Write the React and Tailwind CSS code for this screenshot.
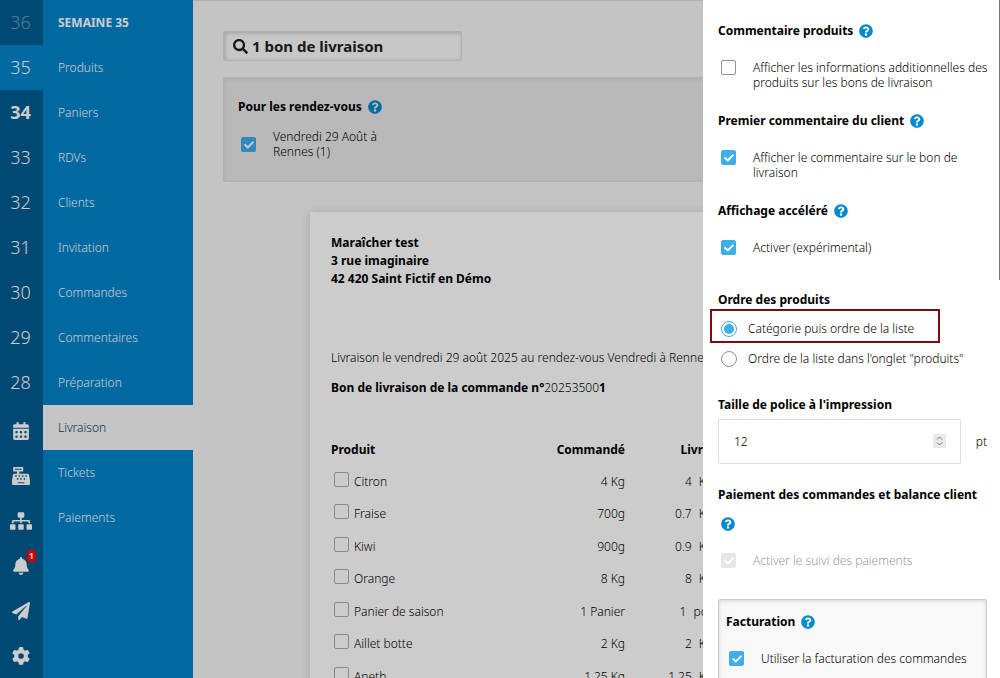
import { useState } from "react";
import {
  FaBell,
  FaCashRegister,
  FaCheck,
  FaPaperPlane,
  FaQuestionCircle,
  FaSearch,
  FaSitemap,
} from "react-icons/fa";
import { FaCalendarDays, FaGear } from "react-icons/fa6";

/* ================= DATA ================= */

const weeks = [36, 35, 34, 33, 32, 31, 30, 29, 28];

const tools = [
  { name: "Calendrier", Icon: FaCalendarDays, size: 18 },
  { name: "Caisse", Icon: FaCashRegister, size: 18 },
  { name: "Réseau", Icon: FaSitemap, size: 22 },
  { name: "Notifications", Icon: FaBell, size: 18, count: 1 },
  { name: "Envois", Icon: FaPaperPlane, size: 18 },
  { name: "Réglages", Icon: FaGear, size: 18 },
];

const menu = [
  "Produits",
  "Paniers",
  "RDVs",
  "Clients",
  "Invitation",
  "Commandes",
  "Commentaires",
  "Préparation",
  "Livraison",
  "Tickets",
  "Paiements",
];

const products = [
  { name: "Citron", ordered: "4 Kg", delivered: "4", unit: "Kg" },
  { name: "Fraise", ordered: "700g", delivered: "0.7", unit: "Kg" },
  { name: "Kiwi", ordered: "900g", delivered: "0.9", unit: "Kg" },
  { name: "Orange", ordered: "8 Kg", delivered: "8", unit: "Kg" },
  { name: "Panier de saison", ordered: "1 Panier", delivered: "1", unit: "pce" },
  { name: "Aillet botte", ordered: "2 Kg", delivered: "2", unit: "Kg" },
  { name: "Aneth", ordered: "1.25 Kg", delivered: "1.25", unit: "Kg" },
];

/* ================= CONTROLS ================= */

function Help() {
  return (
    <button type="button" aria-label="Aide" className="shrink-0 text-[#0088cc]">
      <FaQuestionCircle size={14} />
    </button>
  );
}

function Heading({ children, help }) {
  return (
    <div className={`flex items-center gap-[6px] ${help ? "h-[30px]" : "h-7"}`}>
      <h3 className="font-bold whitespace-nowrap text-black">{children}</h3>
      {help && <Help />}
    </div>
  );
}

function Checkbox({ id, faded, ...props }) {
  return (
    <span className="relative block size-[15px] shrink-0">
      <input
        id={id}
        type="checkbox"
        className={`peer block size-[15px] appearance-none rounded-[2px] border checked:border-[#3daee9] checked:bg-[#3daee9] disabled:border-[#e6e6ea] disabled:bg-[#e6e6ea] ${
          faded ? "border-[#a9a9b5]" : "border-[#8f8f9d]"
        }`}
        {...props}
      />
      <FaCheck
        size={10}
        className="pointer-events-none absolute top-[3px] left-[3px] hidden text-white peer-checked:block"
      />
    </span>
  );
}

function Option({ id, label, disabled, defaultChecked }) {
  return (
    <div className="-mr-1 flex min-h-[60px] items-start gap-[17px] pt-[14px] pl-[3px]">
      <Checkbox id={id} disabled={disabled} defaultChecked={defaultChecked} />
      <label
        htmlFor={id}
        className={`leading-[15px] ${disabled ? "text-[#999]" : "text-black"}`}
      >
        {label}
      </label>
    </div>
  );
}

function Radio({ id, label, value, current, onChange }) {
  return (
    <div className="flex h-[30px] items-center gap-[11px] pl-[3px]">
      <input
        id={id}
        type="radio"
        name="ordre"
        value={value}
        checked={current === value}
        onChange={() => onChange(value)}
        className="block size-4 shrink-0 appearance-none rounded-full border border-[#8f8f9d] bg-white bg-clip-content p-[2px] checked:border-[#3daee9] checked:bg-[#3daee9]"
      />
      <label htmlFor={id}>{label}</label>
    </div>
  );
}

/* ================= NAVIGATION ================= */

function Rail() {
  return (
    <nav className="w-[43px] shrink-0 bg-[#005c91] text-white">
      {weeks.map((w) => (
        <a
          key={w}
          href={`#semaine-${w}`}
          className={`flex h-[45px] items-center justify-center pr-[2px] pb-[2px] text-lg ${
            w === 36 ? "text-white/40" : ""
          } ${w === 35 ? "bg-[#0084cb]" : ""} ${
            w === 34 ? "font-bold" : "font-light"
          }`}
        >
          {w}
        </a>
      ))}

      <div className="pt-[3px]">
        {tools.map(({ name, Icon, size, count }) => (
          <a
            key={name}
            href="#outils"
            aria-label={name}
            className="relative flex h-[45px] items-center justify-center pr-[2px]"
          >
            <Icon size={size} />
            {count && (
              <span className="absolute top-[7px] right-[7px] rounded-[3px] bg-[#f00] px-[2px] text-[9px] leading-[12px] font-bold">
                {count}
              </span>
            )}
          </a>
        ))}
      </div>
    </nav>
  );
}

function Menu() {
  return (
    <nav className="w-[150px] shrink-0 bg-[#0084cb] text-white">
      <h2 className="flex h-[45px] items-center pl-[15px] font-bold">
        SEMAINE 35
      </h2>
      {menu.map((item) => (
        <a
          key={item}
          href="#menu"
          className={`flex h-[45px] items-center pl-[15px] ${
            item === "Livraison" ? "bg-[#f7f7f7] text-[#004466]" : ""
          }`}
        >
          {item}
        </a>
      ))}
    </nav>
  );
}

/* ================= DELIVERY NOTE ================= */

function DeliveryNote() {
  return (
    <article className="mx-[87px] mt-[30px] bg-white px-[21px] pt-[22px] shadow-[0_0_10px_rgba(0,0,0,0.15)]">
      <address className="leading-[18px] font-bold not-italic">
        Maraîcher test
        <br />
        3 rue imaginaire
        <br />
        42 420 Saint Fictif en Démo
      </address>

      <p className="mt-[61px] leading-[18px] whitespace-nowrap">
        Livraison le vendredi 29 août 2025 au rendez-vous Vendredi à Rennes
      </p>
      <p className="mt-3 leading-[18px]">
        <b className="font-bold">Bon de livraison de la commande n°</b>
        20253500
        <b className="font-bold">1</b>
      </p>

      <table className="mt-[38px] w-full table-fixed">
        <thead>
          <tr className="h-[30px]">
            <th className="w-[150px] text-left font-bold">Produit</th>
            <th className="w-[144px] text-right font-bold">Commandé</th>
            <th className="w-[88px] pr-[3px] text-right font-bold">Livré</th>
            <th />
          </tr>
        </thead>
        <tbody>
          {products.map((p) => (
            <tr key={p.name} className="odd:h-[33px] even:h-[32px]">
              <td>
                <div className="flex gap-[5px] pl-[3px]">
                  <Checkbox id={p.name} faded />
                  <label htmlFor={p.name} className="leading-[20px]">
                    {p.name}
                  </label>
                </div>
              </td>
              <td className="text-right">{p.ordered}</td>
              <td>
                <div className="flex justify-end gap-[7px]">
                  <span>{p.delivered}</span>
                  <span>{p.unit}</span>
                </div>
              </td>
              <td />
            </tr>
          ))}
        </tbody>
      </table>
    </article>
  );
}

/* ================= SETTINGS DRAWER ================= */

function Drawer() {
  const [order, setOrder] = useState("categorie");

  return (
    <aside className="absolute inset-y-0 right-0 w-[297px] overflow-hidden bg-white pt-4 pr-[13px] pl-[15px]">
      <Heading help>Commentaire produits</Heading>
      <Option
        id="infos"
        label="Afficher les informations additionnelles des produits sur les bons de livraison"
      />

      <Heading help>Premier commentaire du client</Heading>
      <Option
        id="commentaire"
        label="Afficher le commentaire sur le bon de livraison"
        defaultChecked
      />

      <Heading help>Affichage accéléré</Heading>
      <Option id="accelere" label="Activer (expérimental)" defaultChecked />

      <Heading>Ordre des produits</Heading>
      <div className="relative">
        <Radio
          id="categorie"
          value="categorie"
          label="Catégorie puis ordre de la liste"
          current={order}
          onChange={setOrder}
        />
        <Radio
          id="liste"
          value="liste"
          label={`Ordre de la liste dans l'onglet "produits"`}
          current={order}
          onChange={setOrder}
        />
        <div className="pointer-events-none absolute -top-[5px] -left-[8px] h-[34px] w-[230px] border-2 border-[#7d0c10]" />
      </div>

      <label
        htmlFor="taille"
        className="mt-[17px] flex h-7 items-center font-bold text-black"
      >
        Taille de police à l'impression
      </label>
      <div className="flex items-center justify-between">
        <div className="relative w-[243px]">
          <input
            id="taille"
            type="number"
            defaultValue={12}
            className="block h-[45px] w-full [appearance:textfield] rounded-[2px] border border-[#ddd] px-[15px] font-light"
          />
          <svg
            viewBox="0 0 13 14"
            className="pointer-events-none absolute top-[15px] right-[15px] h-[14px] w-[13px] bg-[#e9e9ed]"
            fill="none"
            stroke="#777"
          >
            <path d="M4 5.5 6.5 3 9 5.5M4 8.5 6.5 11 9 8.5" />
          </svg>
        </div>
        <span>pt</span>
      </div>

      <div className="mt-[17px]">
        <Heading>Paiement des commandes et balance client</Heading>
        <div className="flex h-[30px] items-center pl-[3px]">
          <Help />
        </div>
      </div>
      <Option id="suivi" label="Activer le suivi des paiements" disabled defaultChecked />

      <section className="rounded-[2px] border border-[#ccc] bg-[#f9f9f9] p-[7px] shadow-[inset_0_1px_4px_rgba(0,0,0,0.15)]">
        <Heading help>Facturation</Heading>
        <Option
          id="facturation"
          label="Utiliser la facturation des commandes"
          defaultChecked
        />
      </section>

      {/* scroll thumb */}
      <div className="absolute top-0 right-0 h-[280px] w-px bg-[#777]" />
    </aside>
  );
}

/* ================= PAGE ================= */

export default function App() {
  return (
    <div className="relative flex h-screen overflow-hidden font-['Noto_Sans',sans-serif] text-[12px] font-light text-black">
      <Rail />
      <Menu />

      <main className="min-w-0 flex-1 border-t border-[#ddd] bg-[#f6f6f6] px-[30px] pt-[30px]">
        <div className="relative w-[239px] text-[#222]">
          <FaSearch
            size={15}
            className="pointer-events-none absolute top-[8px] left-[10px]"
          />
          <input
            type="text"
            aria-label="Rechercher un bon de livraison"
            defaultValue="1 bon de livraison"
            className="block h-[30px] w-full rounded-[2px] border border-[#ddd] bg-[#f9f9f9] pl-7 text-[15px] font-bold shadow-[inset_1px_1px_4px_rgba(0,0,0,0.2)]"
          />
        </div>

        <section className="mt-4 h-[105px] border border-[#dfdfdf] bg-[#e8e8e8] px-[14px] pt-[14px] shadow-[inset_0_1px_4px_rgba(0,0,0,0.08)]">
          <Heading help>Pour les rendez-vous</Heading>
          <div className="flex items-center gap-[17px] pt-[7px] pl-[3px]">
            <Checkbox id="rdv" defaultChecked />
            <label htmlFor="rdv" className="w-[120px] leading-[15px]">
              Vendredi 29 Août à Rennes (1)
            </label>
          </div>
        </section>

        <DeliveryNote />
      </main>

      {/* backdrop */}
      <div className="absolute inset-0 bg-black/20" />
      <Drawer />
    </div>
  );
}
